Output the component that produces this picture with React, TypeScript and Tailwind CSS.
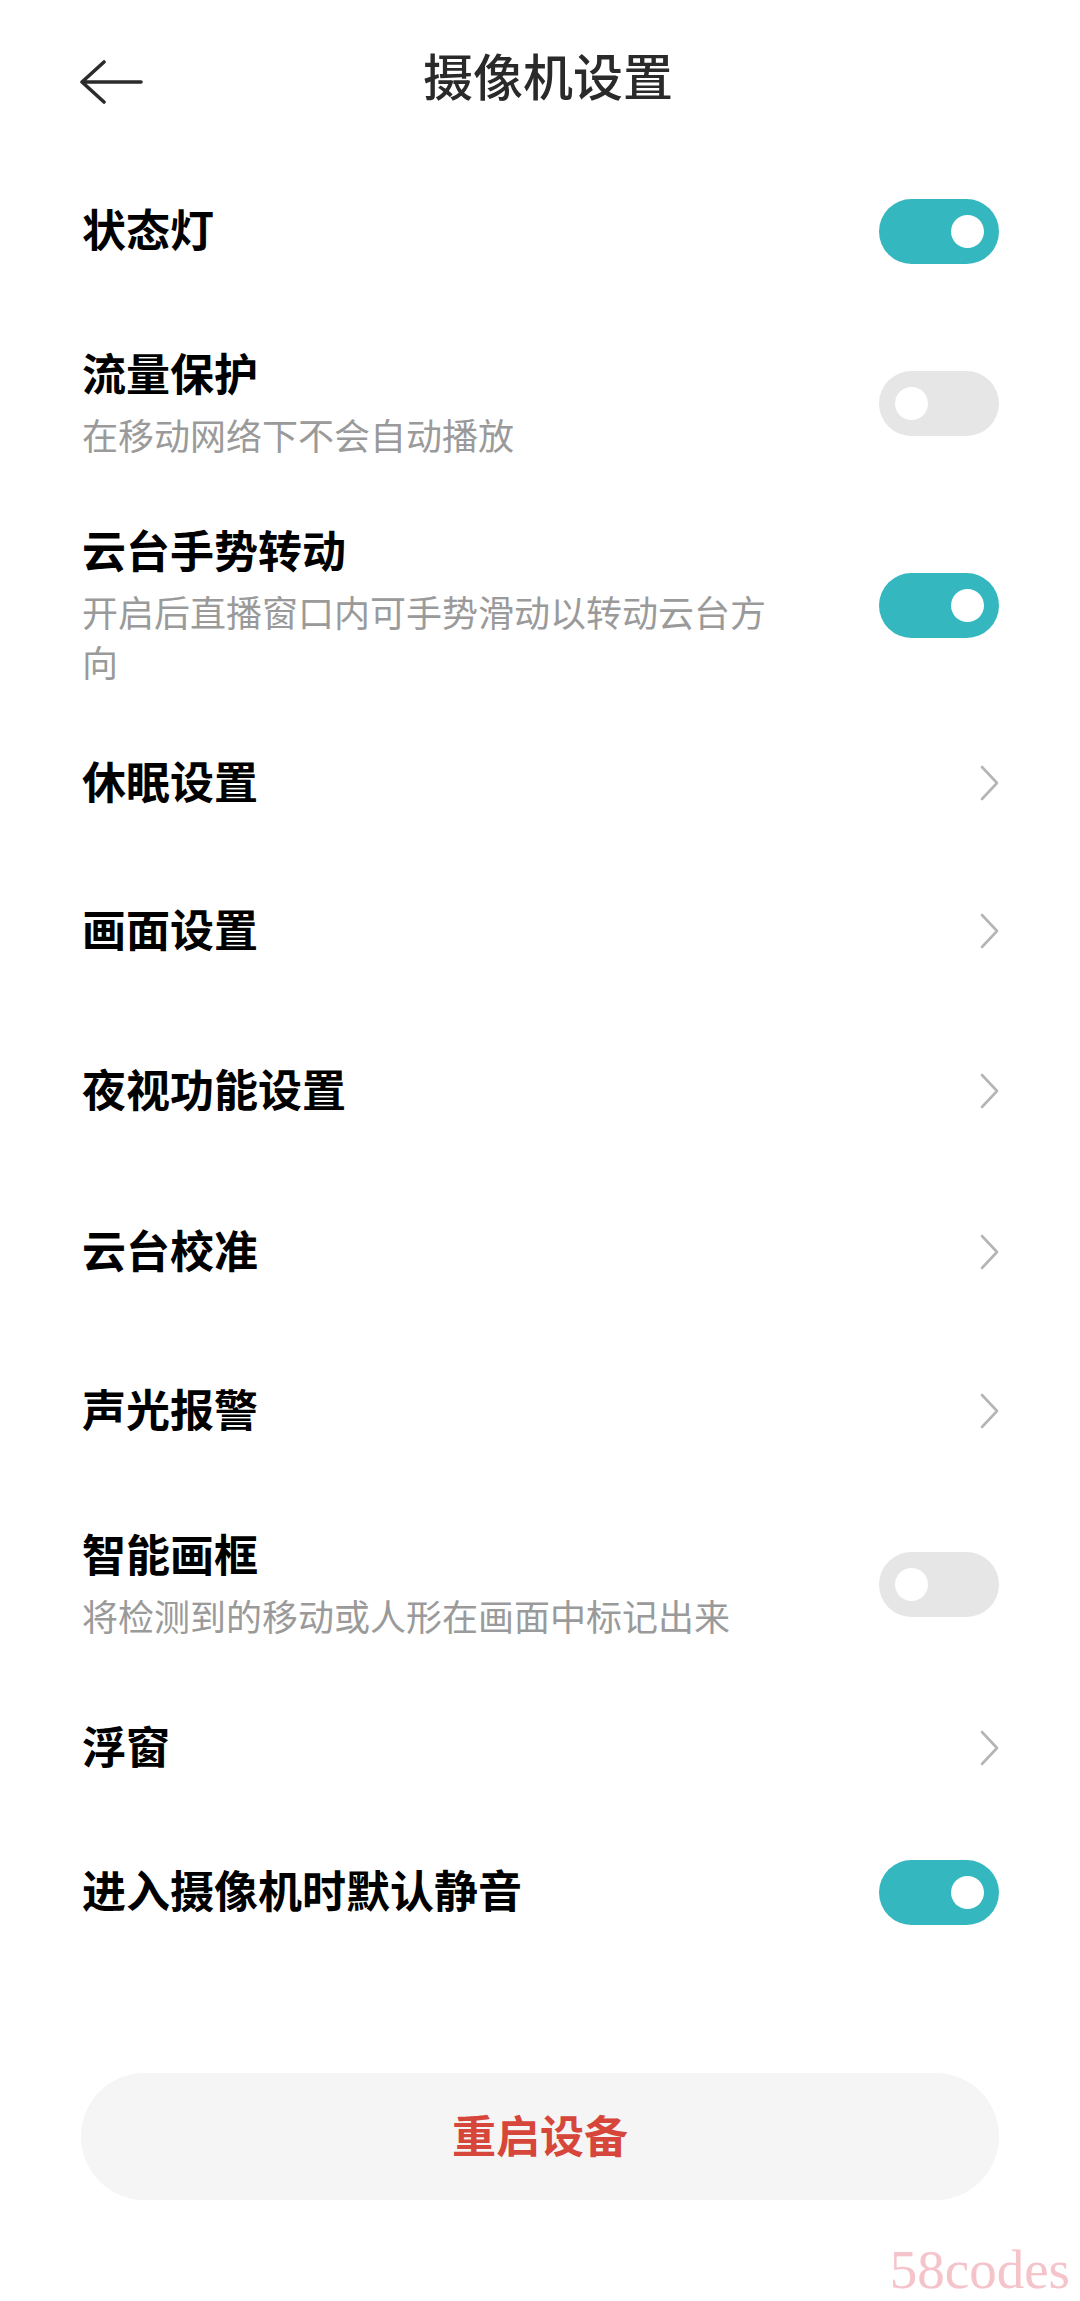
import React from "react";

function Toggle({ on }: { on: boolean }) {
  return (
    <div
      className={
        on
          ? "flex h-[65px] w-[120px] shrink-0 items-center justify-end rounded-full bg-[#35b7c0] px-[15px]"
          : "flex h-[65px] w-[120px] shrink-0 items-center justify-start rounded-full bg-[#e6e6e6] px-[16px]"
      }
    >
      <div className="h-[33px] w-[33px] rounded-full bg-white" />
    </div>
  );
}

function Chevron() {
  return (
    <svg width="20" height="36" viewBox="0 0 20 36" className="shrink-0">
      <path
        d="M3 2 L18 18 L3 34"
        fill="none"
        stroke="#b5b5b5"
        strokeWidth="2.6"
        strokeLinecap="round"
        strokeLinejoin="round"
      />
    </svg>
  );
}

type RowProps = {
  h: string;
  title: string;
  sub?: string;
  toggle?: boolean;
  chevron?: boolean;
};

function Row({ h, title, sub, toggle, chevron }: RowProps) {
  return (
    <div className={"flex items-center justify-between pl-[82px] pr-[81px] " + h}>
      <div className="flex flex-col pb-[6px]">
        <div className="text-[44px] font-bold leading-[60px] text-black">{title}</div>
        {sub ? (
          <div className="mt-[7px] w-[690px] text-[36px] font-normal leading-[50px] text-[#9a9a9a]">
            {sub}
          </div>
        ) : null}
      </div>
      {toggle !== undefined ? <Toggle on={toggle} /> : null}
      {chevron ? <Chevron /> : null}
    </div>
  );
}

export default function App() {
  return (
    <div className="flex min-h-[2301px] w-[1080px] flex-col bg-white font-['Noto_Sans_CJK_SC','Noto_Sans',sans-serif]">
      {/* header */}
      <div className="grid h-[160px] grid-cols-[1fr_auto_1fr] items-center px-[79px]">
        <div className="mt-[4px] justify-self-start">
          <svg width="64" height="44" viewBox="0 0 64 44">
            <path
              d="M62 22 H3 M25 2 L3 22 L25 42"
              fill="none"
              stroke="#2b2b2b"
              strokeWidth="3.6"
              strokeLinecap="round"
              strokeLinejoin="round"
            />
          </svg>
        </div>
        <div className="mb-[12px] ml-[16px] text-[50px] font-medium leading-[60px] text-[#2a2a2a]">
          摄像机设置
        </div>
        <div />
      </div>

      <Row h="h-[142px]" title="状态灯" toggle={true} />
      <Row h="h-[203px]" title="流量保护" sub="在移动网络下不会自动播放" toggle={false} />
      <Row
        h="h-[200px]"
        title="云台手势转动"
        sub="开启后直播窗口内可手势滑动以转动云台方向"
        toggle={true}
      />
      <Row h="h-[156px]" title="休眠设置" chevron />
      <Row h="h-[140px]" title="画面设置" chevron />
      <Row h="h-[180px]" title="夜视功能设置" chevron />
      <Row h="h-[142px]" title="云台校准" chevron />
      <Row h="h-[176px]" title="声光报警" chevron />
      <Row h="h-[170px]" title="智能画框" sub="将检测到的移动或人形在画面中标记出来" toggle={false} />
      <Row h="h-[158px]" title="浮窗" chevron />
      <Row h="h-[130px]" title="进入摄像机时默认静音" toggle={true} />

      <div className="mx-[81px] mt-[116px] flex h-[127px] items-center justify-center rounded-full bg-[#f5f5f5]">
        <span className="pb-[6px] text-[44px] font-bold leading-[60px] text-[#d6463b]">重启设备</span>
      </div>

      <div className="mt-[42px] pr-[10px] text-right font-['Liberation_Serif',serif] text-[55px] leading-none text-[#f5c3ca]">
        58codes
      </div>
    </div>
  );
}
